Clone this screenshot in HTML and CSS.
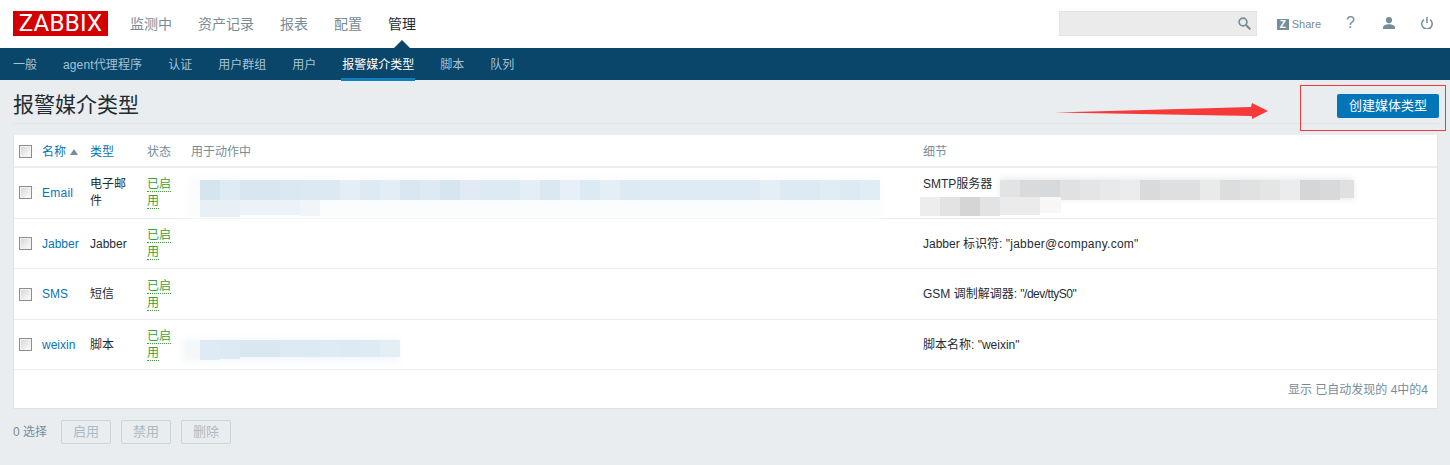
FILE: index.html
```html
<!DOCTYPE html>
<html lang="zh-CN">
<head>
<meta charset="utf-8">
<title>报警媒介类型</title>
<link rel="stylesheet" href="styles.css">
</head>
<body>
<header class="topbar">
  <div class="logo">ZABBIX</div>
  <nav class="mainnav">
    <a>监测中</a><a>资产记录</a><a>报表</a><a>配置</a><a class="active">管理</a>
  </nav>
  <div class="tools">
    <div class="search">
      <svg width="13" height="13" viewBox="0 0 13 13" fill="none" stroke="#768d99" stroke-width="1.700"><circle cx="5" cy="5" r="3.900"/><path d="M8 8l4.300 4.300" stroke-width="2.200"/></svg>
    </div>
    <a class="share"><span class="zbox">Z</span>Share</a>
    <a class="help">?</a>
    <svg class="tool-icon user" width="12" height="12" viewBox="0 0 12 12" fill="#768d99"><circle cx="6" cy="3.100" r="3.100"/><path d="M0 12v-1.800C0 8.300 3.300 7.300 6 7.300s6 1 6 2.900V12z"/></svg>
    <svg class="tool-icon power" width="12" height="12" viewBox="0 0 12 12" fill="none" stroke="#768d99" stroke-width="1.500"><path d="M3 2.600A5.200 5.200 0 1 0 9 2.600"/><path d="M6 0v6"/></svg>
  </div>
</header>
<nav class="subnav">
  <a>一般</a><a class="agent">agent代理程序</a><a>认证</a><a>用户群组</a><a>用户</a><a class="active">报警媒介类型</a><a>脚本</a><a>队列</a>
</nav>
<main class="page">
  <div class="titlebar">
    <h1>报警媒介类型</h1>
    <button class="create" type="button">创建媒体类型</button>
  </div>
  <section class="card">
    <table>
      <colgroup><col class="c-check"><col class="c-name"><col class="c-type"><col class="c-status"><col class="c-actions"><col></colgroup>
      <thead>
        <tr>
          <th><span class="check"></span></th>
          <th><a class="link">名称</a><i class="sort"></i></th>
          <th><a class="link">类型</a></th>
          <th>状态</th>
          <th>用于动作中</th>
          <th>细节</th>
        </tr>
      </thead>
      <tbody>
        <tr class="r1">
          <td><span class="check"></span></td><td><a class="link wide">Email</a></td><td>电子邮件</td><td><a class="status">已启用</a></td><td></td><td>SMTP服务器<br>&nbsp;</td>
        </tr>
        <tr class="r2">
          <td><span class="check"></span></td><td><a class="link">Jabber</a></td><td>Jabber</td><td><a class="status">已启用</a></td><td></td><td>Jabber 标识符: <span class="wide">"jabber@company.com"</span></td>
        </tr>
        <tr class="r3">
          <td><span class="check"></span></td><td><a class="link">SMS</a></td><td>短信</td><td><a class="status">已启用</a></td><td></td><td>GSM 调制解调器: <span class="tight">"/dev/ttyS0"</span></td>
        </tr>
        <tr class="r2">
          <td><span class="check"></span></td><td><a class="link">weixin</a></td><td>脚本</td><td><a class="status">已启用</a></td><td></td><td>脚本名称: "weixin"</td>
        </tr>
      </tbody>
    </table>
    <div class="tablefoot">显示 已自动发现的 4中的4</div>
  </section>
  <div class="actions">
    <span class="selected">0 选择</span>
    <button class="ghost" type="button" disabled>启用</button>
    <button class="ghost" type="button" disabled>禁用</button>
    <button class="ghost" type="button" disabled>删除</button>
  </div>
</main>
<svg class="annotations" width="1450" height="465" viewBox="0 0 1450 465">
  <defs><filter id="soft" x="-5%" y="-50%" width="110%" height="200%"><feGaussianBlur stdDeviation="3"/></filter></defs>
  <!-- arrow and highlight box -->
  <rect x="1300.500" y="85.500" width="145" height="45" fill="none" stroke="#ee3a3a"/>
  <polygon points="1055,112.500 1251,107 1252,103 1268,111 1252,119 1252,116" fill="#f63a3a"/>
  <!-- mosaic: actions row 1 -->
  <rect x="188" y="176" width="694" height="42" fill="#fafcfd" filter="url(#soft)"/>
  <g>
    <rect x="200" y="180" width="20" height="20" fill="#d5e5f0"/><rect x="220" y="180" width="20" height="20" fill="#dfebf4"/><rect x="240" y="180" width="40" height="20" fill="#d7e6f1"/><rect x="280" y="180" width="20" height="20" fill="#dae8f2"/><rect x="300" y="180" width="40" height="20" fill="#dce9f3"/><rect x="340" y="180" width="20" height="20" fill="#e3eef6"/><rect x="360" y="180" width="20" height="20" fill="#dde9f3"/><rect x="380" y="180" width="20" height="20" fill="#e2edf6"/><rect x="400" y="180" width="20" height="20" fill="#d8e7f1"/><rect x="420" y="180" width="20" height="20" fill="#dde9f3"/><rect x="440" y="180" width="20" height="20" fill="#d6e6f1"/><rect x="460" y="180" width="20" height="20" fill="#e2ebf5"/><rect x="480" y="180" width="40" height="20" fill="#dceaf3"/><rect x="520" y="180" width="20" height="20" fill="#e3eef7"/><rect x="540" y="180" width="20" height="20" fill="#dae8f2"/><rect x="560" y="180" width="20" height="20" fill="#e7f0f8"/><rect x="580" y="180" width="20" height="20" fill="#dceaf3"/><rect x="600" y="180" width="20" height="20" fill="#e3eef5"/><rect x="620" y="180" width="20" height="20" fill="#dceaf3"/><rect x="640" y="180" width="120" height="20" fill="#dfebf4"/><rect x="760" y="180" width="20" height="20" fill="#e3eef5"/><rect x="780" y="180" width="40" height="20" fill="#dceaf3"/><rect x="820" y="180" width="20" height="20" fill="#dfedf5"/><rect x="840" y="180" width="20" height="20" fill="#dceaf3"/><rect x="860" y="180" width="20" height="20" fill="#e0edf5"/>
    <rect x="200" y="200" width="40" height="17" fill="#e8f0f6"/><rect x="240" y="200" width="60" height="15" fill="#ecf2f7"/><rect x="300" y="200" width="20" height="16" fill="#f1f5f9"/>
  </g>
  <!-- mosaic: details row 1 -->
  <rect x="1000" y="178" width="354" height="22" fill="#ececed" filter="url(#soft)"/>
  <g>
    <rect x="1000" y="180" width="20" height="20" fill="#e2e3e4"/><rect x="1020" y="180" width="20" height="20" fill="#d9dadc"/><rect x="1040" y="180" width="20" height="20" fill="#d7dadd"/><rect x="1060" y="180" width="20" height="20" fill="#e0e1e2"/><rect x="1080" y="180" width="20" height="20" fill="#e4e5e6"/><rect x="1100" y="180" width="20" height="20" fill="#e8e9ea"/><rect x="1120" y="180" width="20" height="20" fill="#ebeced"/><rect x="1140" y="180" width="20" height="20" fill="#d9dadc"/><rect x="1160" y="180" width="40" height="20" fill="#dedfe0"/><rect x="1200" y="180" width="20" height="20" fill="#e9eaea"/><rect x="1220" y="180" width="20" height="20" fill="#dcddde"/><rect x="1240" y="180" width="20" height="20" fill="#e0e1e3"/><rect x="1260" y="180" width="20" height="20" fill="#e4e5e5"/><rect x="1280" y="180" width="20" height="20" fill="#ebeced"/><rect x="1300" y="180" width="20" height="20" fill="#d5d6d7"/><rect x="1320" y="180" width="20" height="20" fill="#d7d9da"/><rect x="1340" y="180" width="14" height="18" fill="#dfe0e1"/>
    <rect x="920" y="197" width="20" height="19" fill="#eceded"/><rect x="940" y="197" width="20" height="19" fill="#e2e3e3"/><rect x="960" y="197" width="20" height="19" fill="#d4d5d7"/><rect x="980" y="197" width="20" height="19" fill="#e2e3e4"/><rect x="1000" y="197" width="40" height="18" fill="#ebebec"/><rect x="1040" y="197" width="21" height="16" fill="#f7f7f7"/>
  </g>
  <!-- mosaic: actions row 4 -->
  <rect x="182" y="338" width="218" height="24" fill="#f4f8fb" filter="url(#soft)"/>
  <g>
    <rect x="200" y="340" width="20" height="20" fill="#dfebf4"/><rect x="220" y="340" width="20" height="19" fill="#dceaf3"/><rect x="240" y="340" width="40" height="17" fill="#d9e7f1"/><rect x="280" y="340" width="20" height="17" fill="#dde9f3"/><rect x="300" y="340" width="20" height="17" fill="#dceaf3"/><rect x="320" y="340" width="20" height="17" fill="#dfebf4"/><rect x="340" y="340" width="20" height="17" fill="#dceaf3"/><rect x="360" y="340" width="20" height="17" fill="#dfebf4"/><rect x="380" y="340" width="20" height="17" fill="#e3eef5"/>
  </g>
</svg>
</body>
</html>
```

FILE: styles.css
```css
* { box-sizing: border-box; }
html, body { margin: 0; padding: 0; }
body {
  width: 1450px;
  height: 465px;
  overflow: hidden;
  position: relative;
  background: #e9edf0;
  color: #1f2c33;
  font: 12px/17px "Liberation Sans", "Noto Sans CJK SC", sans-serif;
}
a { text-decoration: none; }

.topbar {
  height: 48px;
  background: #fff;
  display: flex;
  align-items: flex-start;
  padding-left: 13px;
}
.logo {
  margin-top: 11px;
  width: 95px;
  height: 25px;
  background: #d40000;
  color: #fff;
  font: 24px/25px Roboto, sans-serif;
  letter-spacing: 0.300px;
  text-align: center;
}
.mainnav {
  display: flex;
  gap: 26px;
  margin-left: 22px;
  font-size: 14px;
  line-height: 48px;
  color: #768d99;
}
.mainnav a { display: block; position: relative; }
.mainnav a.active { color: #1f2c33; }
.mainnav a.active::after {
  content: "";
  position: absolute;
  left: 50%;
  margin-left: -8px;
  bottom: 0;
  border: 8px solid transparent;
  border-top: 0;
  border-bottom-color: #0a466a;
}
.tools {
  margin-left: auto;
  display: flex;
  align-items: flex-start;
  padding-right: 17px;
  color: #768d99;
}
.search {
  margin-top: 11px;
  width: 198px;
  height: 25px;
  background: #ebebeb;
  border: 1px solid #dfe4e7;
  display: flex;
  align-items: center;
  justify-content: flex-end;
  padding-right: 5px;
}
.share {
  display: flex;
  align-items: center;
  margin: 17px 0 0 20px;
  font-size: 11px;
  line-height: 14px;
  height: 14px;
}
.zbox {
  width: 12px;
  height: 11px;
  background: #768d99;
  color: #fff;
  font: bold 10px/11px "Liberation Sans", sans-serif;
  text-align: center;
  margin-right: 3px;
}
.help {
  font-size: 16px;
  line-height: 18px;
  margin: 14px 0 0 25px;
}
.tool-icon { display: block; }
.user { margin: 17px 0 0 28px; }
.power { margin: 17px 0 0 26px; }

.subnav {
  height: 32px;
  background: #0a466a;
  display: flex;
  gap: 26px;
  padding-left: 13px;
  line-height: 34px;
  color: #a4c3d6;
}
.subnav a { display: block; height: 33px; position: relative; }
.subnav a.agent { letter-spacing: 0.120px; }
.subnav a.active {
  color: #fff;
  border-bottom: 3px solid #0f7fc0;
  margin: 0 -1px;
  padding: 0 1px;
}

.page { padding: 0 11px 0 13px; }
.titlebar {
  height: 44px;
  display: flex;
  align-items: center;
  justify-content: space-between;
  border-bottom: 1px solid #dfe4e7;
}
.titlebar h1 {
  margin: 7px 0 0;
  font-size: 21px;
  font-weight: 400;
  line-height: 26px;
  color: #1f2c33;
}
.create {
  width: 102px;
  height: 24px;
  margin-top: 9px;
  border: 0;
  border-radius: 2px;
  background: #0275b8;
  color: #fff;
  font: 13px/24px "Liberation Sans", "Noto Sans CJK SC", sans-serif;
  padding: 0;
}

.card {
  margin-top: 10px;
  margin-right: 1px;
  background: #fff;
  border: 1px solid #dfe4e7;
  border-top-color: #ebeef0;
}
table {
  width: 100%;
  border-collapse: collapse;
  table-layout: fixed;
}
.c-check { width: 23px; }
.c-name { width: 48px; }
.c-type { width: 57px; }
.c-status { width: 44px; }
.c-actions { width: 732px; }
th, td {
  padding: 2px 5px 0;
  text-align: left;
  border-bottom: 1px solid #ebeef0;
  vertical-align: middle;
}
th {
  height: 32px;
  padding-top: 3px;
  font-weight: 400;
  color: #768d99;
  border-bottom-width: 2px;
}
th .check { margin-top: -2px; }
.r1 td { height: 51px; padding-top: 1px; }
.r2 td { height: 50px; }
.r3 td { height: 51px; }
.check {
  display: block;
  width: 13px;
  height: 13px;
  margin-top: -1px;
  border: 1px solid #8e8e8e;
  background: linear-gradient(135deg, #d4d4d4, #fff);
  box-shadow: inset 0 0 0 1px #f2f2f2;
}
.link { color: #0275b8; }
.wide { letter-spacing: 0.250px; }
.tight { letter-spacing: -0.500px; }
.sort {
  display: inline-block;
  margin-left: 4px;
  vertical-align: 1px;
  border: 4px solid transparent;
  border-top: 0;
  border-bottom: 6px solid #768d99;
}
.status {
  color: #3b9f3b;
  border-bottom: 1px dotted #3b9f3b;
}
.tablefoot {
  height: 38px;
  line-height: 40px;
  text-align: right;
  padding-right: 9px;
  color: #768d99;
}

.actions {
  margin-top: 11px;
  display: flex;
  align-items: center;
  color: #768d99;
}
.selected { width: 48px; font-size: 12px; padding-top: 1px; }
.ghost {
  width: 50px;
  height: 24px;
  margin-right: 10px;
  padding: 0;
  border: 1px solid #cdd5d9;
  border-radius: 2px;
  background: transparent;
  color: #acbbc2;
  font: 13px/22px "Liberation Sans", "Noto Sans CJK SC", sans-serif;
}
.annotations {
  position: absolute;
  left: 0;
  top: 0;
  pointer-events: none;
}
```
